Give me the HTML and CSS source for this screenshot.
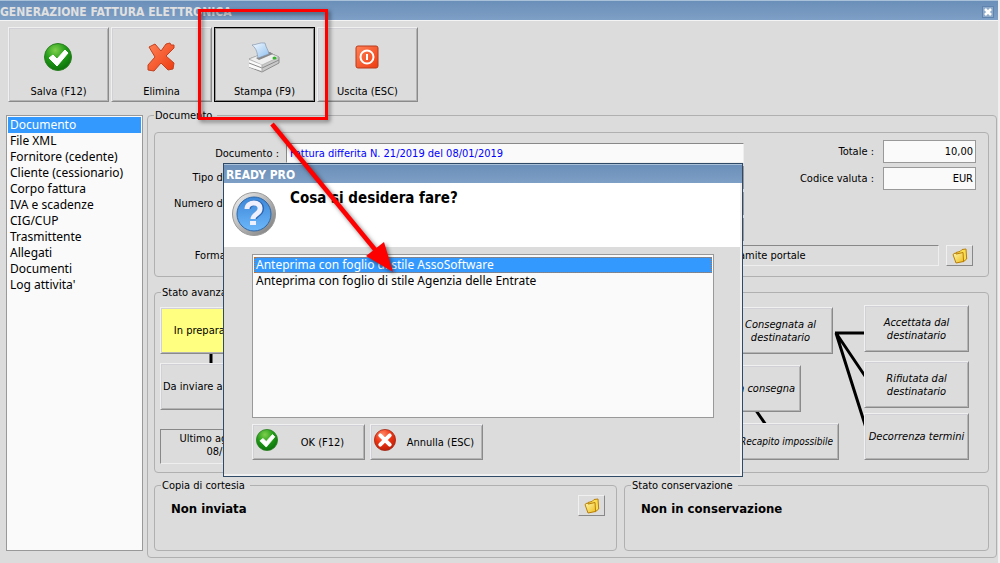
FILE: index.html
```html
<!DOCTYPE html>
<html lang="it">
<head>
<meta charset="utf-8">
<title>Generazione fattura elettronica</title>
<link rel="stylesheet" href="styles.css">
</head>
<body>
<svg class="defs" aria-hidden="true">
  <defs>
    <radialGradient id="green" cx="40%" cy="25%" r="80%"><stop offset="0" stop-color="#7fd04c"/><stop offset=".5" stop-color="#1f9a17"/><stop offset="1" stop-color="#0a6d0a"/></radialGradient>
    <radialGradient id="red" cx="40%" cy="25%" r="80%"><stop offset="0" stop-color="#ff8a68"/><stop offset=".5" stop-color="#ee3312"/><stop offset="1" stop-color="#b81c08"/></radialGradient>
    <linearGradient id="cross" x1="0" y1="0" x2="1" y2="1"><stop offset="0" stop-color="#ff8358"/><stop offset="1" stop-color="#ee3a10"/></linearGradient>
    <linearGradient id="blue" x1="0" y1="0" x2="0" y2="1"><stop offset="0" stop-color="#3c86d8"/><stop offset="1" stop-color="#6db8fa"/></linearGradient>
    <linearGradient id="ring" x1="0" y1="0" x2="1" y2="1"><stop offset="0" stop-color="#f4f4f4"/><stop offset="1" stop-color="#777"/></linearGradient>
    <linearGradient id="sheet" x1="0" y1="0" x2="1" y2="1"><stop offset="0" stop-color="#f4faff"/><stop offset="1" stop-color="#8fc0f0"/></linearGradient>
    <linearGradient id="gold" x1="0" y1="0" x2="1" y2="1"><stop offset="0" stop-color="#fff8b0"/><stop offset="1" stop-color="#eebc18"/></linearGradient>
    <symbol id="i-ok" viewBox="0 0 28 28"><circle cx="14" cy="14" r="13.5" fill="url(#green)" stroke="#2c7f22"/><path d="M5 15l4-3 4 4 8-9 3 3-11 13z" fill="#fff" stroke="#fff" stroke-linejoin="round"/></symbol>
    <symbol id="i-no" viewBox="0 0 28 28"><circle cx="14" cy="14" r="13.5" fill="url(#red)" stroke="#a02a18"/><path d="M8 8l12 12M20 8L8 20" stroke="#fff" stroke-width="5" stroke-linecap="round"/></symbol>
    <symbol id="i-folder" viewBox="0 0 16 16"><path d="M4 4.500l4-1 2-2 4-.5.700 10L11 14z" fill="#f9dc50" stroke="#b98008"/><path d="M1 6.500l2-1.500 1.500 1L11 4.500l.6 9L4 15z" fill="url(#gold)" stroke="#b98008"/></symbol>
  </defs>
</svg>
<div class="window">
  <header class="titlebar">
    <h1>GENERAZIONE FATTURA ELETTRONICA</h1>
    <button class="close" aria-label="Chiudi"><svg width="8" height="8" viewBox="0 0 8 8"><path d="M1 1l6 6M7 1L1 7" stroke="#fff" stroke-width="2.500"/></svg></button>
  </header>

  <div class="toolbar">
    <button class="tool"><svg class="tool-icon" viewBox="0 0 32 32"><use href="#i-ok" x="1" y="2" width="28" height="28"/></svg>Salva (F12)</button>
    <button class="tool"><svg class="tool-icon" viewBox="0 0 32 32"><path d="M3 6l6-3 6 7 5-7 4-1 1 2 3 0 0 3-8 8 8 7-1 6-5 1-7-7-7 8-6-1 0-5 7-8z" fill="url(#cross)" stroke="#c4411f" stroke-linejoin="round"/></svg>Elimina</button>
    <button class="tool tool-default"><svg class="tool-icon" viewBox="1 0 32 32"><path d="M1 18L20 11l11 5v6L14 31 1 26z" fill="#c9c9c9" stroke="#8d8d8d"/><path d="M1 18L19 11l12 5-17 8z" fill="#efefef" stroke="#aaa" stroke-width=".7"/><path d="M1 19l13 5v6L1 26z" fill="#fafafa"/><path d="M1 22l13 5 17-8" fill="none" stroke="#8a8a8a"/><path d="M14 24v7" stroke="#aaa"/><path d="M8 17l14-6 3 2-14 6z" fill="#888"/><path d="M4 4c4 0 8-3 13-2 1 5 3 6 4 11L10 17C9 12 9 8 4 4z" fill="url(#sheet)" stroke="#8795ac" stroke-width=".7"/><ellipse cx="26.500" cy="17" rx="2" ry="1.500" fill="#35b52d"/></svg>Stampa (F9)</button>
    <button class="tool"><svg class="tool-icon" viewBox="1 0 32 32"><rect x="5" y="5" width="22" height="22" rx="2" fill="url(#cross)" stroke="#b93a1c"/><circle cx="16" cy="16" r="6.500" fill="none" stroke="#fff" stroke-width="2"/><path d="M16 13v6" stroke="#fff" stroke-width="2"/></svg>Uscita (ESC)</button>
  </div>

  <main class="content">
    <nav class="sections">
      <button class="item selected">Documento</button>
      <button class="item">File XML</button>
      <button class="item">Fornitore (cedente)</button>
      <button class="item">Cliente (cessionario)</button>
      <button class="item">Corpo fattura</button>
      <button class="item">IVA e scadenze</button>
      <button class="item">CIG/CUP</button>
      <button class="item">Trasmittente</button>
      <button class="item">Allegati</button>
      <button class="item">Documenti</button>
      <button class="item">Log attivita'</button>
    </nav>

    <fieldset class="group page">
      <legend>Documento</legend>

      <section class="group form">
        <div class="fields">
          <label for="doc">Documento :</label><input id="doc" class="field sunken link" value="Fattura differita N. 21/2019 del 08/01/2019">
          <label for="tipo">Tipo documento :</label><input id="tipo" class="field">
          <label for="num">Numero documento :</label><input id="num" class="field">
          <span></span><input class="field" aria-label="Data documento">
        </div>
        <div class="totals">
          <label for="tot">Totale :</label><input id="tot" class="field" value="10,00">
          <label for="val">Codice valuta :</label><input id="val" class="field" value="EUR">
        </div>
        <div class="format">
          <span class="format-label">Formato fattura :</span>
          <output class="field sunken readonly">tramite portale</output>
          <button class="folder" aria-label="Apri"><svg width="16" height="16"><use href="#i-folder"/></svg></button>
        </div>
      </section>

      <fieldset class="group flow">
        <legend>Stato avanzamento</legend>
        <div class="canvas">
          <svg class="links" width="834" height="170" aria-hidden="true"><path d="M56 50v20M600 110l11 16M680 34h32M681 34l31 46M681 34l31 98" fill="none" stroke="#000" stroke-width="3"/></svg>
          <button class="node prep active">In preparazione</button>
          <button class="node send">Da inviare allo SDI</button>
          <div class="node update">Ultimo aggiornamento<br>08/01/2019</div>
          <button class="node delivered italic">Consegnata al destinatario</button>
          <button class="node missed italic">Mancata consegna</button>
          <button class="node failed italic">Recapito impossibile</button>
          <button class="node accepted italic">Accettata dal destinatario</button>
          <button class="node refused italic">Rifiutata dal destinatario</button>
          <button class="node expired italic">Decorrenza termini</button>
        </div>
      </fieldset>

      <div class="bottom">
        <fieldset class="group status">
          <legend>Copia di cortesia</legend>
          <div class="status-row"><strong>Non inviata</strong><button class="folder" aria-label="Apri copia"><svg width="16" height="16"><use href="#i-folder"/></svg></button></div>
        </fieldset>
        <fieldset class="group status">
          <legend>Stato conservazione</legend>
          <div class="status-row"><strong>Non in conservazione</strong></div>
        </fieldset>
      </div>
    </fieldset>
  </main>
</div>

<div class="dialog" role="dialog" aria-labelledby="dialog-title">
  <div class="dialog-bar" id="dialog-title">READY PRO</div>
  <div class="dialog-head">
    <svg width="44" height="44" viewBox="0 0 44 44"><circle cx="22" cy="22" r="21.500" fill="url(#ring)" stroke="#999"/><circle cx="22" cy="22" r="17" fill="url(#blue)" stroke="#2f68a8"/><path d="M16 17c0-8 14-8 13 0 0 5-7 5-7 10" fill="none" stroke="#2d68b4" stroke-width="6"/><path d="M15 17c0-8 14-8 13 0 0 5-7 5-7 10" fill="none" stroke="#eef0ff" stroke-width="5"/><rect x="18" y="29" width="6" height="4" fill="#eef0ff"/></svg>
    <h2>Cosa si desidera fare?</h2>
  </div>
  <div class="dialog-body">
    <div class="choices">
      <button class="item selected">Anteprima con foglio di stile AssoSoftware</button>
      <button class="item">Anteprima con foglio di stile Agenzia delle Entrate</button>
    </div>
    <div class="actions">
      <button class="action"><svg width="22" height="22"><use href="#i-ok"/></svg><span>OK (F12)</span></button>
      <button class="action"><svg width="22" height="22"><use href="#i-no"/></svg><span>Annulla (ESC)</span></button>
    </div>
  </div>
</div>

<svg class="marker" width="410" height="290" aria-hidden="true">
  <rect x="199.500" y="10.500" width="127" height="108" fill="none" stroke="#f00" stroke-width="3"/>
  <path d="M272 124L377 252" stroke="#f00" stroke-width="4.500"/>
  <path d="M366 256L384 242 393 272z" fill="#f00"/>
</svg>
</body>
</html>
```

FILE: styles.css
```css
* { box-sizing: border-box; }
body {
  margin: 0;
  position: relative;
  background: #dcdcdc;
  color: #000;
  font: 11px/13px "DejaVu Sans Condensed", "DejaVu Sans", sans-serif;
}
button, input { font: inherit; color: inherit; }
button { background: #dcdcdc; }
.defs { position: absolute; width: 0; height: 0; }

.window {
  min-height: 100vh;
  display: flex;
  flex-direction: column;
  border-right: 2px solid #f0f0f0;
  border-bottom: 1px solid #f0f0f0;
}
.titlebar {
  height: 21px;
  display: flex;
  align-items: center;
  justify-content: space-between;
  padding: 3px 4px 0 0;
  border-top: 1px solid #a9c2da;
  border-bottom: 1px solid #f4f4f4;
  background: linear-gradient(#6a8fb8, #7e9fc6);
}
.titlebar h1 {
  margin: 0;
  color: #e0e0e0;
  font: bold 12px/16px "DejaVu Sans Condensed", sans-serif;
}
.close {
  width: 12px;
  height: 12px;
  display: grid;
  place-items: center;
  padding: 0;
  border: 1px solid #5f84ad;
  background: #8fabc9;
}

.toolbar { display: flex; gap: 2px; padding: 6px 8px 0; }
.tool, .action, .node {
  border: 1px solid;
  border-color: #f0f0f0 #8a8a8a #8a8a8a #f0f0f0;
  box-shadow: inset 1px 1px #d0d0d6, inset -1px -1px #b4b4b4;
}
.tool {
  width: 101px;
  height: 75px;
  display: flex;
  flex-direction: column;
  align-items: center;
  justify-content: space-between;
  padding: 13px 0 3px;
}
.tool-default { border-color: #000; box-shadow: inset 1px 1px #999, inset -1px -1px #888; }
.tool-icon { width: 32px; height: 32px; }

.content { flex: 1; display: flex; gap: 4px; padding: 7px 1px 5px 6px; }
.sections {
  width: 137px;
  margin: 6px 0 7px;
  border: 1px solid #999;
  padding: 1px;
  background: #fafafa;
}
.item {
  width: 100%;
  height: 16px;
  display: block;
  padding: 0 2px;
  border: 0;
  background: none;
  text-align: left;
  white-space: nowrap;
  font: 12px/16px "Noto Sans", sans-serif;
}
.selected { background: #3399ff; color: #fff; }

.group { min-width: 0; margin: 0; border: 1px solid #b0b0b0; border-radius: 4px; }
.group > legend { margin: 0; padding: 0 5px 0 1px; }
.page { flex: 1; display: flex; flex-direction: column; padding: 10px 7px 6px 6px; }

.form {
  display: grid;
  grid-template-columns: 589px 1fr;
  margin-bottom: 9px;
  padding: 7px 12px 10px 0;
}
.fields {
  display: grid;
  grid-template-columns: 124px 1fr;
  grid-template-rows: 20px repeat(3, 23px);
  gap: 3px 7px;
  padding-top: 3px;
  align-items: center;
}
.fields label, .totals label, .format-label { text-align: right; }
.field {
  width: 100%;
  min-width: 0;
  height: 100%;
  padding: 0 3px;
  border: 1px solid #999;
  background: #fafafa;
}
.sunken { border: 1px solid; border-color: #888 #eee #eee #888; }
.link { color: #00f; }
.totals {
  display: grid;
  grid-template-columns: 1fr 93px;
  grid-template-rows: 23px 23px;
  align-content: start;
  align-items: center;
  gap: 4px 9px;
}
.totals .field { padding: 0 2px; text-align: right; }
.format {
  grid-column: 1 / -1;
  display: grid;
  grid-template-columns: 124px 1fr 27px;
  column-gap: 7px;
  align-items: center;
  height: 21px;
  margin: 4px 3px 0 0;
}
.readonly { padding: 3px 3px 0 444px; background: #dcdcdc; white-space: nowrap; }
.folder {
  width: 27px;
  height: 21px;
  display: grid;
  place-items: center;
  padding: 0;
  border: 1px solid;
  border-color: #f0f0f0 #888 #888 #f0f0f0;
}

.flow { margin-bottom: 6px; padding: 0; }
.flow > legend { margin-left: 6px; }
.canvas { position: relative; height: 173px; }
.links { position: absolute; left: 0; top: 0; }
.node {
  position: absolute;
  width: 105px;
  height: 47px;
  padding: 0 8px;
  text-align: center;
}
.italic { font-style: italic; }
.node.active { background: #ffff80; }
.prep { left: 5px; top: 8px; }
.send { left: 5px; top: 64px; white-space: nowrap; padding: 0 2px; text-align: left; }
.update { left: 5px; top: 130px; width: 150px; height: 35px; padding-top: 2px; border-color: #888 #eee #eee #888; box-shadow: none; }
.delivered { left: 573px; top: 8px; }
.missed { left: 541px; top: 66px; padding: 0; }
.failed { left: 579px; top: 124px; height: 37px; padding: 0; white-space: nowrap; font-size: 10px; }
.accepted { left: 709px; top: 6px; }
.refused { left: 709px; top: 62px; }
.expired { left: 709px; top: 114px; padding: 0; }

.bottom { display: grid; grid-template-columns: 463fr 365fr; gap: 7px; }
.status { height: 72px; padding: 0 11px 0 6px; }
.status-row { display: flex; justify-content: space-between; align-items: flex-start; padding: 3px 0 0 10px; }
.status-row strong { font-size: 13px; line-height: 28px; }

.dialog {
  position: absolute;
  left: 223px;
  top: 163px;
  width: 520px;
  border: 1px solid #2f4a66;
  background: #dcdcdc;
  box-shadow: inset -2px -2px #f0f0f0;
}
.dialog-bar {
  height: 19px;
  padding: 2px 2px 0;
  background: linear-gradient(#6a8fb8, #7e9fc6);
  border-top: 1px solid #a9c2da;
  color: #fff;
  font-size: 12px;
  font-weight: bold;
  line-height: 16px;
}
.dialog-head {
  height: 64px;
  display: flex;
  gap: 14px;
  margin-right: 2px;
  padding: 9px 8px;
  background: #fff;
}
.dialog-head h2 { margin: 0; font-size: 15px; line-height: 12px; }
.dialog-body { padding: 7px 28px 16px; }
.choices { height: 164px; border: 1px solid #999; padding: 2px 1px 1px; background: #fafafa; }
.choices .selected { outline: 1px dotted #c67028; outline-offset: -1px; }
.actions { display: flex; gap: 5px; padding-top: 6px; }
.action {
  width: 113px;
  height: 36px;
  display: flex;
  align-items: center;
  padding: 0 3px;
}
.action span { flex: 1; text-align: center; padding-left: 6px; }
.action svg { margin-bottom: 4px; }

.marker { position: absolute; left: 0; top: 0; pointer-events: none; filter: drop-shadow(2px 2px 2px rgba(0, 0, 0, .5)); }
```
